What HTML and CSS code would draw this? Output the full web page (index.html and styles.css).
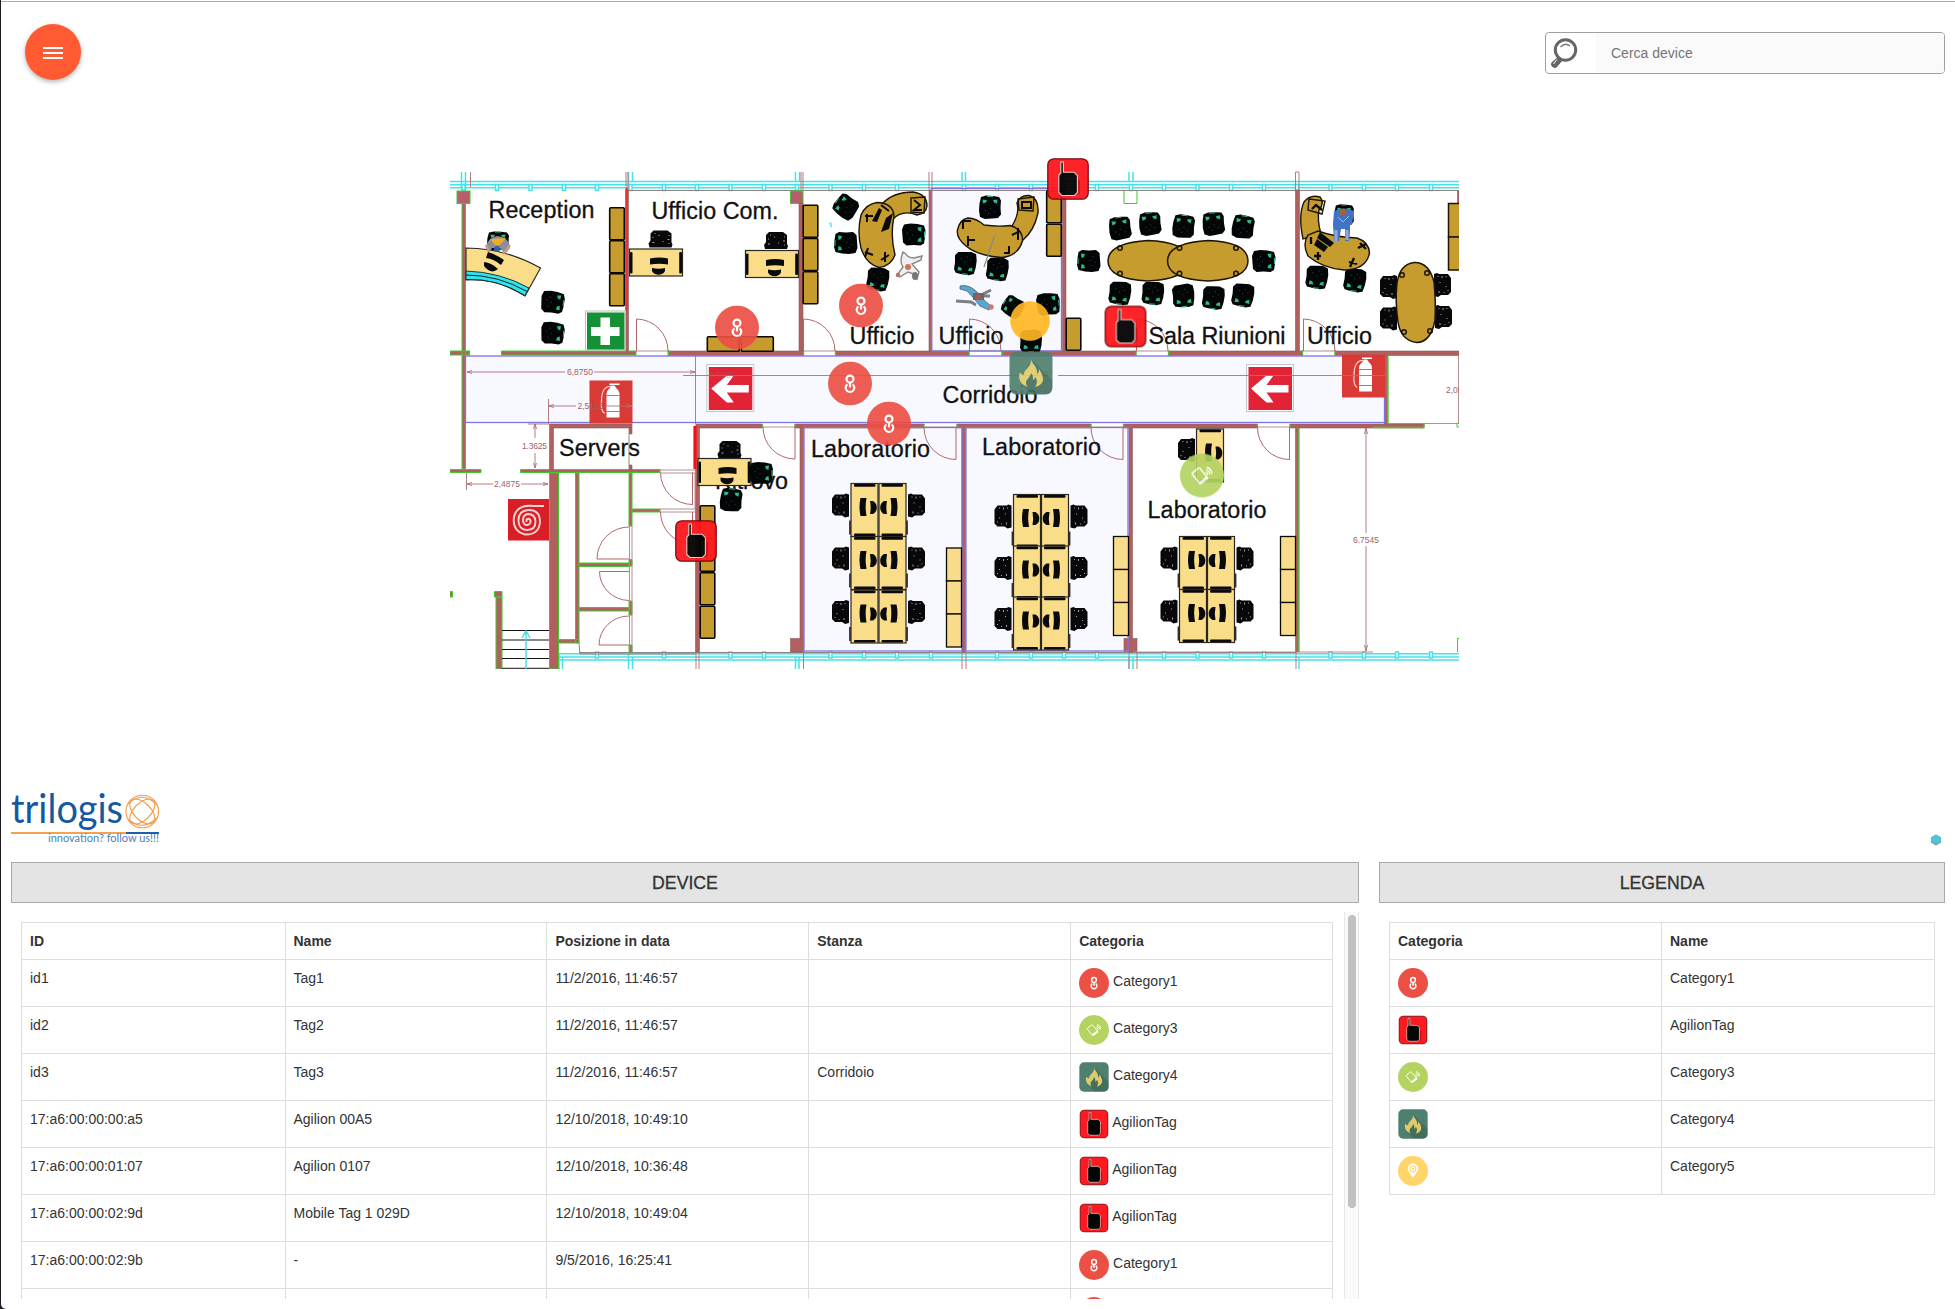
FILE: index.html
```html
<!DOCTYPE html>
<html lang="it">
<head>
<meta charset="utf-8">
<title>Trilogis - Device</title>
<link rel="stylesheet" href="styles.css">
</head>
<body>
<svg class="defs" width="0" height="0" aria-hidden="true">
  <defs>
    <symbol id="i-link" viewBox="0 0 44 44"><circle cx="22" cy="22" r="22" fill="#ec4f44"/><g fill="none" stroke="#fff" stroke-width="2.2"><circle cx="22" cy="17.6" r="3.5"/><path d="M22 21V26M19.4 22.8A4.3 4.3 0 1 0 24.6 22.8"/></g></symbol>
    <symbol id="i-phone" viewBox="0 0 44 44"><circle cx="22" cy="22" r="22" fill="#b4d361"/><g fill="none" stroke="#fff" stroke-width="1.400" stroke-linejoin="round"><path d="M12.300 19.500L18.500 14.600Q19.500 14.200 20.200 15L27.800 24.600L21 30Q20 30.400 19.200 29.500L12.300 20.800Q11.800 20 12.300 19.500Z"/><path d="M25.500 18.600Q27.500 19.400 27.800 21.600M26 16.300Q29.600 17.400 30 21M26.400 14Q31.500 15 32 20.400"/></g><path d="M19.200 28.400L26.600 22.800L28.200 25L21 30.400Z" fill="#fff"/></symbol>
    <symbol id="i-fire" viewBox="0 0 44 44"><rect x=".5" y=".5" width="43" height="43" rx="7" fill="#4f7f6e"/><path d="M24 10L43 29V37Q43 43 37 43H22L15 35Z" fill="#416b5a" opacity=".8"/><path d="M22 8C23 14 29 15 28 23C30 22 30 19 30 18C34 24 35 29 33 31.500C31 35 28 35.500 26 36C29 32 28 28 26 26C26 28 25 28.500 24 29C24 26 24 24 22 22C22 26 17 28 17 32C17 34 18 35 19 36C13 34 10 30 10 25C10 23 11 22 11.500 21.500C12 23 13 24 15 24C14 18 23 17 22 8Z" fill="#dfca69"/></symbol>
    <symbol id="i-tag" viewBox="0 0 44 44"><rect x="1.800" y="1.800" width="40.400" height="40.400" rx="6" fill="#fe1a20" stroke="#7a0508" stroke-width="1.300"/><path d="M20 18L28 17L34 24V37L22 40Z" fill="#a80b10" opacity=".6"/><path d="M14.800 5H17.400V15.200H28L31.400 18.500V35.500L28.500 38.500H15.800L12.800 35.500V18L14.800 16Z" fill="#050505" stroke="#f0c8c0" stroke-width="1.100"/></symbol>
    <symbol id="i-pin" viewBox="0 0 44 44"><circle cx="22" cy="22" r="22" fill="#fed46b"/><path d="M22 32L15.500 22.500A7.600 7.600 0 1 1 28.500 22.500Z" fill="#fff"/><circle cx="22" cy="19" r="4.300" fill="none" stroke="#fed46b" stroke-width="1.500"/><circle cx="22" cy="19" r="1.700" fill="#fed46b"/></symbol>

    <g id="chair"><path d="M-9-10.500L-4-12L3-11.500L9-10.500L11-7L10.500 0L11 7L8 10.500L2 11L-5 11.500L-10 9.500L-11 3L-10.500-4Z" fill="#030606"/><path d="M-7.500-8L-3-7.500L-4-5L-7-4ZM7.500-8L3-7.500L4-5L7-4ZM-3-11.500H3V-10.500H-3Z" fill="#2fb98d"/><path d="M-5 3H-4M0 1H1M4 4H5M-2 6H-1" stroke="#555" stroke-width=".7"/></g>
    <g id="seat"><path d="M-9-7L-6-11H3L5-12L8-11V11L4 12L1 10H-6L-9 7Z" fill="#08080a"/><path d="M-4-9V-8M0-9V-7M4-9V-8M-6 5V6M-2 7V8M3 6V8M2-3V-2M-4 1V2" stroke="#ccc" stroke-width=".8"/></g>
    <g id="desk"><rect width="27" height="53" fill="#fadd88" stroke="#2b2722" stroke-width="1.200"/><rect x="3" y=".500" width="21.500" height="2.800" rx="1" fill="#0a0a0c"/><rect x="3" y="50" width="21.500" height="2.500" rx="1" fill="#0a0a0c"/><path d="M9.500 14.500H15.500Q13.800 23 15.500 32.500H9.500Q7.500 23 9.500 14.500ZM19 17.500L22 17.500Q25.800 19.500 25.800 24Q25.800 28.500 22 30.500L19 30.500Q20.300 24 19 17.500Z" fill="#0a0a0c"/></g>
    <g id="pair"><use href="#desk" x="-27.500"/><use href="#desk" x="-27.500" transform="scale(-1 1)"/><path d="M-28.500 37V51M28.500 37V51" stroke="#332c2c" stroke-width="1.800"/><use href="#seat" x="-37.500" y="22"/><use href="#seat" x="-37.500" y="22" transform="scale(-1 1)"/></g>
    <g id="cab"><rect x=".7" y=".7" width="14.600" height="32" rx="1" fill="#c69c2f" stroke="#0b0903" stroke-width="1.600"/></g>
    <g id="ycab" fill="#f8dc8b" stroke="#0b0903" stroke-width="1.300"><rect width="15" height="33"/><rect y="33" width="15" height="33"/><rect y="66" width="15" height="33"/></g>
    <g id="door" fill="none" stroke="#b4676b"><path d="M.5 32V0A32 32 0 0 1 32 32"/></g>
    <g id="ldoor" fill="none" stroke="#b4676b"><path d="M0 0A32 32 0 0 0 32 32V0"/></g>
    <g id="tick"><rect x="-1.500" y="184.500" width="3" height="6"/></g>
    <g id="arrow"><rect x="-1" y="-1" width="47" height="47" fill="#fff" stroke="#c4c4cc"/><rect x="1" y="1.500" width="43.500" height="43" fill="#e22336"/><path d="M3.500 23L19 10H26L19 19.500H41V27H19L26 37H19Z" fill="#fff"/></g>
    <g id="ext"><rect width="43" height="43" fill="#d93a35"/><path d="M17 14Q17 10 20 8L22 5H25L27 8Q30 10 30 14V37H17ZM20 3H30V4.500H20Z" fill="#fff"/><path d="M22 6Q12 5 12 21Q11 30 15 33" fill="none" stroke="#f7d5d2" stroke-width="1.200"/><path d="M17 15H30M17 31H30" stroke="#d93a35" stroke-width=".8"/></g>
  </defs>
</svg>

<div class="page">
  <header class="top">
    <button class="fab" aria-label="Menu"><span></span><span></span><span></span></button>
    <label class="search">
      <span class="search-icon"><svg width="28" height="32" viewBox="0 0 28 32"><path d="M8.500 20L12 23.500L6.500 30Q4.500 31.500 2.500 29.500Q.5 27.500 2 25.500Z" fill="#666" stroke="#666"/><circle cx="15.500" cy="13" r="10.200" fill="#fff" stroke="#666" stroke-width="3"/><path d="M10.500 10Q15 5 20 9" fill="none" stroke="#777" stroke-width="1.300"/><path d="M3.500 27L7 22.500" stroke="#fff" stroke-width="1"/></svg></span>
      <input type="text" placeholder="Cerca device">
    </label>
  </header>

  <svg class="plan" width="1009" height="519" viewBox="450 150 1009 519">
    <!-- selectable rooms -->
    <g fill="#f8f8ff"><rect x="465" y="356" width="920" height="67"/><rect x="932" y="188" width="130" height="163"/><rect x="804" y="427" width="158" height="224"/><rect x="966" y="427" width="162" height="224"/></g>

    <!-- windows -->
    <g fill="none" stroke="#45e2e8" stroke-width="1.500">
      <path d="M450 181.500H1459M450 184.700H1459M450 187.700H1459M559 653.700H1459M559 656.900H1459M559 660H1459"/>
      <path d="M461.500 190V172M465.500 172V190M628.500 190V172M632.500 172V181M795.500 181V172M799.500 172V181M962 181V172M965.500 172V181M1129 181V172M1133 172V181"/>
      <path d="M559 669V653M562.500 669V657M628.500 669V653M632.500 669V657M795.500 669V657M799 669V657M1129 669V657M1133 669V657M1299 669V657"/>
    </g>
    <g fill="#fff" stroke="#45e2e8" stroke-width="1.500">
      <use href="#tick" x="463.500"/><use href="#tick" x="497"/><use href="#tick" x="530.500"/><use href="#tick" x="564"/><use href="#tick" x="597"/><use href="#tick" x="630.500"/><use href="#tick" x="664"/><use href="#tick" x="697"/><use href="#tick" x="730.500"/><use href="#tick" x="764"/><use href="#tick" x="797"/><use href="#tick" x="830.500"/><use href="#tick" x="864"/><use href="#tick" x="897"/><use href="#tick" x="964"/><use href="#tick" x="997"/><use href="#tick" x="1031"/><use href="#tick" x="1097"/><use href="#tick" x="1131"/><use href="#tick" x="1164"/><use href="#tick" x="1197.500"/><use href="#tick" x="1231"/><use href="#tick" x="1264"/><use href="#tick" x="1297"/><use href="#tick" x="1330.500"/><use href="#tick" x="1364"/><use href="#tick" x="1397"/><use href="#tick" x="1431"/>
    </g>
    <g fill="#fff" stroke="#45e2e8" stroke-width="1.500" transform="translate(0 467.500)">
      <use href="#tick" x="597"/><use href="#tick" x="664"/><use href="#tick" x="730.500"/><use href="#tick" x="764"/><use href="#tick" x="830.500"/><use href="#tick" x="864"/><use href="#tick" x="897"/><use href="#tick" x="931"/><use href="#tick" x="997"/><use href="#tick" x="1031"/><use href="#tick" x="1064"/><use href="#tick" x="1097"/><use href="#tick" x="1164"/><use href="#tick" x="1197.500"/><use href="#tick" x="1231"/><use href="#tick" x="1264"/><use href="#tick" x="1330.500"/><use href="#tick" x="1364"/><use href="#tick" x="1397"/><use href="#tick" x="1431"/>
    </g>
    <g fill="none" stroke="#b9797c"><path d="M470.500 172V187M626 172V190M628 172V190M801 172V190M803 172V190M929 172V190M932 172V190M1062.500 172V190M1065.500 172V190M1295.500 190V172H1299V190M696 652V669M699 652V669M803.500 652V669M962 652V669M966 652V669M1129 652V669M1137 652V669M1296 652V669"/></g>
    <path d="M628 190.500H1459M579 652.500H1296" stroke="#8d8484" fill="none"/>

    <!-- walls -->
    <g stroke="#3fc92e" stroke-width="1" fill="#b2605f">
      <path d="M462 203H465.500V469H462ZM450 351H469V355H450ZM501.500 351H636V355H501.500ZM450 469.500H481V472.500H450ZM520.500 469.500H660V472.500H520.500ZM549.500 473H558.500V669H549.500ZM575.500 473H579V643H575.500ZM558.500 639.500H579V643H558.500ZM579 563H629V566.500H579ZM579 607.500H629V611H579ZM629 473H632V526H629ZM629 559.500H632V566H629ZM629 601H632V615H629ZM629 645H632V653H629ZM632 509H660V512H632Z"/>
      <path d="M496 597H502V669H496ZM494.500 591.500H502V597H494.500ZM450 591.500H452.500V597H450Z"/>
      <rect x="457" y="191" width="13" height="12.500" fill="#b45f6a"/><rect x="790.500" y="191" width="12.500" height="12.500" fill="#b45f6a"/>
      <path d="M1124 191V203.500H1137V191" fill="none"/><path d="M1459 638.500H1457.500V652M1457 423V427H1459" fill="none"/>
    </g>
    <g fill="#b2605f" stroke="#8c5a5b" stroke-width=".6">
      <path d="M625.500 190H628.500V351H625.500ZM799 203H803V351H799ZM929 190H932V351H929ZM1062.500 190H1066V351H1062.500ZM1295.500 190H1299.500V351H1295.500Z"/>
      <path d="M668 351H803V355.500H668ZM835.500 351H969V355.500H835.500ZM1002 351H1136V355.500H1002ZM1168.500 351H1302V355.500H1168.500ZM1335 351H1459V355.500H1335Z"/>
      <path d="M549.500 424H632V428H553.500V470H549.500ZM629 428H632V434H629ZM629 465H632V470H629ZM696 424H762V428H699.500V652H695.500V428ZM795 424H924V428H803.500V652H800V428H795ZM957 424H1091V428H965.500V652H962V428H957ZM1123.500 424H1257.500V428H1132.500V652H1129V428H1123.500ZM1290 424H1424V428H1298.500V652H1295.500V428H1290ZM1384.500 355H1387.500V424H1384.500Z"/>
      <rect x="790.500" y="638.500" width="13" height="13.500"/><rect x="1124" y="638.500" width="13" height="13"/><path d="M1457.500 191H1459V203H1457.500Z"/>
    </g>
    <path d="M626.800 188V310" stroke="#e3343a" stroke-width="2"/><path d="M695 426V469" stroke="#fb0d14" stroke-width="3.200"/>
    <path d="M629 434V465M579 643L580 654H696" stroke="#8d8484" fill="none"/>
    <path d="M1388 356V424M1299 428V652M1373 427.500H1424V424M469.500 350.500V355.500M668.500 350V356M803.500 350V356M835.500 350V356M969 350V356M1002 350V356M1136 350V356M1168.500 350V356M1302.500 350V356M1335 350V356M762.500 424V428M795 424V428M924 424V428M957 424V428M1091 424V428M1123.500 424V428M1257.500 424V428M1290 424V428" stroke="#3fc92e" stroke-width="1.300" fill="none"/>
    <path d="M1388 423.500H1459M1458.500 356V423M1137 652H1373M636 351H668M803 351H835M969 351H1002M1136 351H1168M1302 351H1335M762 427H795M924 427H957M1091 427H1123M1257 427H1290M660 470H695M660 473H695M660 509H695M660 512H695M692.500 473V505M695 473V509M629.500 526V652M632 526V652" stroke="#a88486" fill="none" stroke-width=".9"/>

    <!-- doors -->
    <use href="#door" x="636" y="319"/><use href="#door" x="803" y="319"/><use href="#door" x="969" y="319"/><use href="#door" x="1136" y="319"/><use href="#door" x="1303" y="319"/>
    <use href="#ldoor" x="763" y="427"/><use href="#ldoor" x="924" y="427.500"/><use href="#ldoor" x="1091" y="427.500"/><use href="#ldoor" x="1257.500" y="427.500"/><use href="#ldoor" x="660.500" y="472.500"/><use href="#ldoor" x="660.500" y="512"/>
    <g fill="none" stroke="#b4676b"><path d="M629 559H597A32 32 0 0 1 629 527M629 571.500H599.500A30 29 0 0 0 629 600.500M629 645H599A30 29 0 0 1 629 616"/></g>

    <!-- room outlines -->
    <g fill="none" stroke="#7d74e4" stroke-width="1.300"><rect x="465.500" y="356" width="919" height="66.500"/><rect x="931.500" y="188.500" width="130" height="162.500"/><rect x="804" y="427.500" width="158" height="223.500"/><rect x="966" y="427.500" width="162" height="223.500"/></g>

    <!-- stairs -->
    <path d="M502 630.500H549M502 640H549M502 649.500H549M502 658.500H549M502 668.300H549" stroke="#111"/>
    <path d="M526 669V631M522 638L526 631L530 638" stroke="#3fdce4" fill="none" stroke-width="1.400"/>

    <!-- signs -->
    <rect x="585.500" y="311" width="40" height="39" fill="#fff" stroke="#b9c2ba"/><rect x="587" y="312.500" width="37.500" height="37" fill="#149036"/><path d="M600.500 317.500H610V327H619.500V336H610V345H600.500V336H591V327H600.500Z" fill="#fff"/>
    <use href="#ext" x="589.500" y="380.500"/><use href="#ext" x="1342" y="354.500"/>
    <use href="#arrow" x="707.800" y="365.500"/><use href="#arrow" x="1247.500" y="365.500"/>
    <rect x="508" y="499" width="41" height="41.500" fill="#d91f26"/>
    <path d="M544 506H534Q517 504 514 517Q512 531 525 534.500Q539 535 540 522Q540 509.500 528 510Q518 511 518.500 521Q519 530 527 530Q535.500 530 535.500 521.500Q535 514 528 514Q522.500 515 523 521Q524 525.500 527.500 525Q531 524 530.500 520.500Q529 517.500 526.500 519.500V522" fill="none" stroke="#f9d4d4" stroke-width="1.900"/>

    <!-- dimensions -->
    <g stroke="#ad7073" stroke-width=".9" fill="none">
      <path d="M467 372H565M594 372H695M695.500 356V424M683 375.500H1048M1058 375.500H1385M549 406H576M605 406H632M548.500 399V424M535 424V438M535 453V468M528 424H549M466.500 473V490M467 484H493M521 484H548M1366 428V533M1366 546V651"/>
      <path d="M472 370.500L467 372L472 373.500M690 370.500L695 372L690 373.500M554 404.500L549 406L554 407.500M627 404.500L632 406L627 407.500M533.500 429L535 424L536.500 429M533.500 463L535 468L536.500 463M472 482.500L467 484L472 485.500M543 482.500L548 484L543 485.500M1364.500 434L1366 428L1367.500 434M1364.500 645L1366 651L1367.500 645"/>
    </g>
    <g class="dim"><text x="567" y="375" textLength="26">6,8750</text><text x="577.500" y="409" textLength="26">2,5123</text><text x="709" y="378" textLength="27" opacity=".55">9,9900</text><text x="1041" y="377" opacity=".6">,37</text><text x="522" y="448.500" textLength="25">1.3625</text><text x="494" y="487" textLength="26">2,4875</text><text x="1353" y="543" textLength="26">6.7545</text><text x="1446" y="392.500">2,05</text></g>

    <!-- room names -->
    <g class="room">
      <text x="488.500" y="218" textLength="106">Reception</text><text x="651.500" y="219" textLength="127">Ufficio Com.</text><text x="849.500" y="344" textLength="65">Ufficio</text><text x="938.500" y="344" textLength="65">Ufficio</text><text x="942.500" y="403" textLength="95">Corridoio</text><text x="1148.500" y="343.500" textLength="137">Sala Riunioni</text><text x="1307" y="343.500" textLength="65">Ufficio</text><text x="559" y="456" textLength="81">Servers</text><text x="715" y="489" textLength="73">Ritrovo</text><text x="811" y="457" textLength="119">Laboratorio</text><text x="982" y="455" textLength="119">Laboratorio</text><text x="1147.500" y="517.500" textLength="119">Laboratorio</text>
    </g>

    <!-- reception -->
    <path d="M466 248Q505 248 540.500 268L525 296Q497 278 466 280Z" fill="#fadd88" stroke="#222" stroke-width="1.100"/>
    <path d="M466 271Q500 272 529 288L525 295.500Q497 278 466 279.500Z" fill="#2fe4ea" stroke="#123" stroke-width=".9"/><path d="M466 275Q498 275 527 291.500" stroke="#123" fill="none"/>
    <use href="#chair" transform="translate(498 241) scale(1 .8)"/>
    <path d="M486 248Q487 238 497 236Q509 237 510 248L505 254L500 248H492L489 252Z" fill="#8d8e9b"/><path d="M490 239L506 238L500 245H495Z" fill="#efad22"/><circle cx="497" cy="249" r="3" fill="#2f63a8"/><path d="M486 245L489 252M510 245L503 254" stroke="#c39a90" stroke-width="2.500"/>
    <g fill="#0a0a0c"><path d="M488 252Q497 255 504 260L501 265Q494 259 486 258ZM484 262Q492 263 498 269Q491 275 484 266Z"/></g>
    <use href="#chair" transform="translate(552.500 302) rotate(96)"/><use href="#chair" transform="translate(552.500 333) rotate(94)"/>
    <use href="#cab" x="609" y="207"/><use href="#cab" x="609" y="240"/><use href="#cab" x="609" y="273"/>

    <!-- ufficio com. -->
    <use href="#seat" transform="translate(660.500 239.500) rotate(90)"/><use href="#desk" transform="translate(682.500 249) rotate(90)"/>
    <use href="#seat" transform="translate(776 241) rotate(90)"/><use href="#desk" transform="translate(798.500 250.500) rotate(90)"/>
    <use href="#cab" transform="translate(774 336) rotate(90)"/><use href="#cab" transform="translate(740 336) rotate(90)"/>

    <!-- ufficio 1 -->
    <use href="#cab" x="802.500" y="204.500"/><use href="#cab" x="802.500" y="237.800"/><use href="#cab" x="802.500" y="271"/>
    <use href="#chair" transform="translate(846 207) rotate(-55)"/><use href="#chair" transform="translate(846 243) rotate(-90)"/><use href="#chair" transform="translate(913.500 234.500) rotate(90)"/><use href="#chair" transform="translate(878 279) rotate(188)"/>
    <g fill="#c69c2f" stroke="#1b1505" stroke-width="1.400"><path d="M882 204Q893 192 913 192Q927 194 927 206Q926 214 917 215Q902 209 892 220Z"/><path d="M877 202.500Q893 203 894 216Q890 236 895 255Q891 266 879 267.500Q866 264 861 248Q857 232 861 215Q866 204 877 202.500Z"/><path d="M911 198L925 197L924 213L911 212Z" fill="none"/></g>
    <path d="M914 200L920 205L914 210H922M865 216H873M867 214V222M865 252L873 255M868 248L865 257M889 255L881 260M885 252V262M881 205L889 211" stroke="#0c0a04" stroke-width="2" fill="none"/>
    <path d="M882 210L877 222L872 221L879 208ZM893 213L889 229L881 232L886 218Z" fill="#0a0a0c"/>
    <g fill="#eee" stroke="#8a8686" stroke-width="1.400"><path d="M903 252Q899 262 903 267L897 275L900 277L908 272L914 274L917 279L919 272L912 264L921 260L922 256L914 258Q908 258 906 254Z"/></g><circle cx="908" cy="267" r="3" fill="#d0705c"/><circle cx="898" cy="275" r="2.300" fill="#b8736c"/><ellipse cx="915" cy="276" rx="3" ry="4" fill="#777"/><path d="M829 223l3 4M831 222v5" stroke="#4fe0e6"/>

    <!-- ufficio 2 -->
    <use href="#chair" transform="translate(990 207.500)"/><use href="#chair" transform="translate(965.500 263) rotate(184)"/><use href="#chair" transform="translate(997.500 269) rotate(186)"/><use href="#chair" transform="translate(1013 307) rotate(-60) scale(.9)"/><use href="#chair" transform="translate(1048 304) rotate(84)"/><use href="#chair" transform="translate(1031 341) rotate(180)"/>
    <g fill="#c69c2f" stroke="#1b1505" stroke-width="1.400"><path d="M1012 226Q1020 213 1017 203Q1020 195 1029 195.500Q1039 198 1038 213Q1034 231 1023 240Z"/><path d="M968 218Q976 218 984 225Q998 227 1010 225.500Q1023 229 1022.500 241Q1018 256 1002 257.500Q978 256 966 246Q956 238 957.500 230Q960 219 968 218Z"/><path d="M1018 199L1034 197L1033 211L1019 210Z" fill="none"/></g>
    <path d="M1022 202H1031V208H1022ZM963 229V221H971M967 240H975M968 236V246M1004 253H1009V246M1012 235L1020 231M1018 228V240" stroke="#0c0a04" stroke-width="2" fill="none"/><path d="M994.500 236L984 267" stroke="#8b8684" stroke-width="1.200"/>
    <use href="#cab" x="1046" y="190"/><use href="#cab" x="1046" y="223.500"/><use href="#cab" x="1065.500" y="317.500"/>
    <path d="M960 286Q968 284 976 291L980 295Q985 302 991 306L989 310L980 306Q974 298 967 291L960 289Z" fill="#5aa7cf" stroke="#47636f" stroke-width=".8"/><path d="M956 301L971 302L976 305M991 290L983 294M980 296H990" stroke="#7d7d84" stroke-width="3" fill="none"/><path d="M973 293H984V300H973Z" fill="#66666d"/><circle cx="978" cy="297" r="3" fill="#a65a4a"/><circle cx="991" cy="307" r="2.700" fill="#c97b6b"/>

    <!-- sala riunioni -->
    <g><use href="#chair" transform="translate(1120 228.500) rotate(-8)"/><use href="#chair" transform="translate(1150 224) rotate(-6)"/><use href="#chair" transform="translate(1183.500 226.500) rotate(5)"/><use href="#chair" transform="translate(1213.500 224) rotate(-6)"/><use href="#chair" transform="translate(1243 227) rotate(8)"/><use href="#chair" transform="translate(1089 261) rotate(-90)"/><use href="#chair" transform="translate(1263.500 261) rotate(90)"/><use href="#chair" transform="translate(1120 293) rotate(186)"/><use href="#chair" transform="translate(1153 293) rotate(184)"/><use href="#chair" transform="translate(1183.500 295.500) rotate(175)"/><use href="#chair" transform="translate(1213.500 297.500) rotate(186)"/><use href="#chair" transform="translate(1243 295) rotate(188)"/></g>
    <g fill="#c69c2f" stroke="#1b1505" stroke-width="1.500"><path d="M1148 240.500Q1188 242 1188 261Q1188 279 1148 281Q1108 279 1108 261Q1108 243 1148 240.500Z"/><path d="M1208 240.500Q1248 242 1248 261Q1248 279 1208 281Q1167.500 279 1167.500 261Q1167.500 243 1208 240.500Z"/><g fill="none"><circle cx="1120" cy="248" r="2.300"/><circle cx="1120" cy="273.500" r="2.300"/><circle cx="1179.500" cy="248" r="2.300"/><circle cx="1179.500" cy="273.500" r="2.300"/><circle cx="1236" cy="248" r="2.300"/><circle cx="1236" cy="273.500" r="2.300"/></g></g>

    <!-- ufficio 3 -->
    <use href="#chair" transform="translate(1317 277) rotate(186)"/><use href="#chair" transform="translate(1355 280) rotate(188)"/><use href="#chair" transform="translate(1344 215) scale(.9)"/>
    <g fill="#c69c2f" stroke="#1b1505" stroke-width="1.400"><path d="M1303 239Q1298 215 1304 202Q1310 194 1320 197Q1325 203 1319 210Q1317 220 1321 234Z"/><path d="M1318 231Q1334 237 1357 238Q1369 242 1369.500 253Q1366 270 1344 270Q1322 268 1308 256Q1302 244 1308 235Z"/><path d="M1309 199L1325 201L1322 214L1308 210Z" fill="none"/></g>
    <path d="M1312 209L1316 205L1322 210M1318 252V260M1314 256H1321M1349 262L1357 264M1354 258L1350 267M1360 243L1366 249M1358 248L1366 244M1311 237V244" stroke="#0c0a04" stroke-width="2.300" fill="none"/><path d="M1320 232L1334 243L1330 247L1317 238ZM1317 239L1328 247L1324 252L1314 245Z" fill="#0a0a0c"/>
    <path d="M1334 211Q1344 206 1354 211L1352 225L1350 224V232L1349 241H1345V229H1341L1339 241H1334L1333 224Z" fill="#3f73c4"/><path d="M1338 217L1343 222L1349 216" stroke="#9fb6dc" fill="none"/><circle cx="1343" cy="212" r="3.500" fill="#a85f33"/><path d="M1336 230V241M1347 230V240" stroke="#93a9d1" stroke-width="3"/>
    <use href="#seat" transform="translate(1389 287)"/><use href="#seat" transform="translate(1389 318.500)"/><use href="#seat" transform="translate(1442 285) scale(-1 1)"/><use href="#seat" transform="translate(1443 317) scale(-1 1)"/>
    <g fill="#c69c2f" stroke="#1b1505" stroke-width="1.500"><path d="M1414 262.500Q1429 262 1434 282Q1436 302 1435 320Q1431 342 1417 342.500Q1401 341 1398 322Q1395 302 1397 283Q1400 264 1414 262.500Z"/><g fill="none"><circle cx="1402" cy="275" r="2.300"/><circle cx="1427" cy="273" r="2.300"/><circle cx="1404" cy="332" r="2.300"/><circle cx="1430" cy="331" r="2.300"/></g><rect x="1448.500" y="203.500" width="16" height="33.500"/><rect x="1448.500" y="237" width="16" height="33"/></g>

    <!-- ritrovo -->
    <use href="#seat" transform="translate(729.500 450) rotate(90)"/><use href="#desk" transform="translate(751 458.500) rotate(90)"/><use href="#chair" transform="translate(761 473) rotate(90)"/><use href="#chair" transform="translate(731 500) rotate(5)"/>
    <use href="#cab" x="699.500" y="505"/><use href="#cab" x="699.500" y="538.500"/><use href="#cab" x="699.500" y="572"/><use href="#cab" x="699.500" y="605.500"/>

    <!-- laboratori -->
    <use href="#pair" x="878.500" y="483.500"/><use href="#pair" x="878.500" y="536.500"/><use href="#pair" x="878.500" y="590"/><use href="#ycab" x="946.500" y="548"/>
    <use href="#pair" x="1041" y="494.500"/><use href="#pair" x="1041" y="546"/><use href="#pair" x="1041" y="597"/><use href="#ycab" x="1113.500" y="536.500"/>
    <use href="#pair" x="1207" y="536.500"/><use href="#pair" x="1207" y="589.500"/><use href="#ycab" x="1280.500" y="536.500"/>
    <use href="#seat" x="1187" y="450"/><use href="#desk" x="1196.500" y="429"/>

    <!-- device markers -->
    <g opacity=".92">
      <use href="#i-link" x="715" y="305.500" width="44" height="44"/><use href="#i-link" x="839" y="283.500" width="44" height="44"/><use href="#i-link" x="828" y="361.500" width="44" height="44"/><use href="#i-link" x="867" y="401.500" width="44" height="44"/>
      <use href="#i-phone" x="1180" y="453.500" width="44" height="44"/>
      <circle cx="1030" cy="321" r="19.800" fill="#ffb825"/>
      <use href="#i-fire" x="1009" y="351" width="44" height="44"/>
    </g>
    <g opacity=".96"><use href="#i-tag" x="1046" y="157" width="44" height="44"/><use href="#i-tag" x="1103.500" y="304.500" width="44" height="44"/><use href="#i-tag" x="674" y="519" width="44" height="44"/></g>
  </svg>

  <div class="brand">
    <svg class="brand-mark" width="150" height="54" viewBox="10 790 150 54">
      <text class="logo" x="11" y="822.500" textLength="112" lengthAdjust="spacingAndGlyphs">trilogis</text>
      <g fill="none" stroke="#f09d4e" stroke-width="1.100"><circle cx="142.300" cy="811.500" r="16.300"/><ellipse cx="142.300" cy="811.500" rx="15.500" ry="8.500" transform="rotate(45 142.300 811.500)"/><ellipse cx="142.300" cy="811.500" rx="15.500" ry="8.500" transform="rotate(-45 142.300 811.500)"/><path d="M128 804Q142 790 157 805M128 819Q142 832 157 818"/></g>
      <path d="M11 833H126" stroke="#f4a24d" stroke-width="1.800"/><path d="M126 833H159" stroke="#1f5fa8" stroke-width="1.800"/>
      <text class="tagline" x="48" y="842" textLength="111" lengthAdjust="spacingAndGlyphs">innovation? follow us!!!</text>
    </svg>
    <svg class="hex" width="12" height="12" viewBox="0 0 12 12"><path d="M6 .5L11 3.500V8.500L6 11.500L1 8.500V3.500Z" fill="#7f98a3"/><path d="M6 .5L11 3.500V7.500L6 10L1 7.500V3.500Z" fill="#4fc4d4"/></svg>
  </div>

  <main class="panels">
    <section class="device">
      <h2>DEVICE</h2>
      <div class="scroll">
        <div class="pane">
          <table>
            <thead><tr><th class="first">ID</th><th>Name</th><th>Posizione in data</th><th>Stanza</th><th>Categoria</th></tr></thead>
            <tbody>
              <tr><td>id1</td><td>Tag1</td><td>11/2/2016, 11:46:57</td><td></td><td><svg class="ico"><use href="#i-link"/></svg> Category1</td></tr>
              <tr><td>id2</td><td>Tag2</td><td>11/2/2016, 11:46:57</td><td></td><td><svg class="ico"><use href="#i-phone"/></svg> Category3</td></tr>
              <tr><td>id3</td><td>Tag3</td><td>11/2/2016, 11:46:57</td><td>Corridoio</td><td><svg class="ico"><use href="#i-fire"/></svg> Category4</td></tr>
              <tr><td>17:a6:00:00:00:a5</td><td>Agilion 00A5</td><td>12/10/2018, 10:49:10</td><td></td><td><svg class="ico"><use href="#i-tag"/></svg> AgilionTag</td></tr>
              <tr><td>17:a6:00:00:01:07</td><td>Agilion 0107</td><td>12/10/2018, 10:36:48</td><td></td><td><svg class="ico"><use href="#i-tag"/></svg> AgilionTag</td></tr>
              <tr><td>17:a6:00:00:02:9d</td><td>Mobile Tag 1 029D</td><td>12/10/2018, 10:49:04</td><td></td><td><svg class="ico"><use href="#i-tag"/></svg> AgilionTag</td></tr>
              <tr><td>17:a6:00:00:02:9b</td><td>-</td><td>9/5/2016, 16:25:41</td><td></td><td><svg class="ico"><use href="#i-link"/></svg> Category1</td></tr>
              <tr><td></td><td></td><td></td><td></td><td><svg class="ico"><use href="#i-link"/></svg></td></tr>
            </tbody>
          </table>
        </div>
        <div class="track"><div class="thumb"></div></div>
      </div>
    </section>
    <section class="legend">
      <h2>LEGENDA</h2>
      <div class="pane">
        <table>
          <thead><tr><th class="first">Categoria</th><th>Name</th></tr></thead>
          <tbody>
            <tr><td><svg class="ico"><use href="#i-link"/></svg></td><td>Category1</td></tr>
            <tr><td><svg class="ico"><use href="#i-tag"/></svg></td><td>AgilionTag</td></tr>
            <tr><td><svg class="ico"><use href="#i-phone"/></svg></td><td>Category3</td></tr>
            <tr><td><svg class="ico"><use href="#i-fire"/></svg></td><td>Category4</td></tr>
            <tr><td><svg class="ico"><use href="#i-pin"/></svg></td><td>Category5</td></tr>
          </tbody>
        </table>
      </div>
    </section>
  </main>
</div>
</body>
</html>
```
FILE: styles.css
```css
* { box-sizing: border-box; }
html { background: #1c1c24; }
body {
  margin: 0;
  font: 14px/20px "Liberation Sans", Arial, sans-serif;
  color: #333;
  overflow: hidden;
}
.defs { display: block; position: absolute; }
.page {
  height: 1309px;
  margin-left: 1px;
  padding-top: 1px;
  background: #fff;
  border-bottom-left-radius: 5px;
  overflow: hidden;
}

.top {
  display: flex;
  justify-content: space-between;
  align-items: flex-start;
  height: 83px;
  padding: 22px 10px 0 24px;
  border-top: 1px solid #ababab;
}
.fab {
  display: flex;
  flex-direction: column;
  align-items: center;
  justify-content: center;
  gap: 3px;
  width: 56px;
  height: 56px;
  padding: 1px 0 0;
  border: 0;
  border-radius: 50%;
  background: #ff5a31;
  box-shadow: 0 2px 5px rgba(0, 0, 0, .3);
}
.fab span { width: 20px; height: 2px; background: #fff; }
.search {
  display: flex;
  width: 400px;
  height: 42px;
  margin-top: 8px;
  border: 1px solid #a0a0a0;
  border-radius: 4px;
  overflow: hidden;
}
.search-icon { width: 50px; padding: 4px 0 0 4px; }
.search input {
  flex: 1;
  padding: 0 15px;
  border: 0;
  background: #fafafa;
  font: inherit;
}
.search input::placeholder { color: #757575; }

.plan { display: block; margin: 66px 0 0 449px; }
.room {
  font: 23.3px "Liberation Sans", Arial, sans-serif;
  fill: #111;
  stroke: #111;
  stroke-width: .3px;
}
.dim { font: 8.5px "Liberation Sans", Arial, sans-serif; fill: #a45f63; }

.brand {
  display: flex;
  justify-content: space-between;
  align-items: flex-start;
  height: 72px;
  margin-top: 121px;
  padding: 0 13px 0 9px;
}
.brand-mark { overflow: visible; }
.hex { margin-top: 44px; }
.logo { font: 41px Lato, sans-serif; fill: #1558a0; }
.tagline { font: 11px Lato, sans-serif; fill: #4d80ba; }

.panels { display: flex; gap: 20px; padding: 0 10px; }
.device { width: 1348px; }
.legend { width: 566px; }
h2 {
  margin: 0;
  height: 41px;
  border: 1px solid #a9a9a9;
  background: #e4e4e4;
  font-size: 17.7px;
  font-weight: 500;
  line-height: 40px;
  text-align: center;
  -webkit-text-stroke: .3px #333;
}
.scroll { display: flex; height: 387px; margin-top: 9px; overflow: hidden; }
.scroll .pane { flex: 1; padding: 10px 11px 0 10px; }
.legend .pane { padding: 19px 10px 0; }
.track {
  width: 15px;
  padding: 3px 2px 0 3px;
  border: 1px solid #e7e7e7;
  border-width: 0 1px;
  background: #fafafa;
}
.thumb { width: 8px; height: 293px; border-radius: 4px; background: #c1c1c1; }

table { width: 100%; table-layout: fixed; border-collapse: collapse; }
th, td { padding: 8px; border: 1px solid #ddd; text-align: left; vertical-align: top; }
th { height: 37px; }
td { height: 47px; }
.device .first { width: 263.5px; }
.legend .first { width: 272px; }
.ico { width: 30px; height: 30px; vertical-align: -12.4px; }
```
